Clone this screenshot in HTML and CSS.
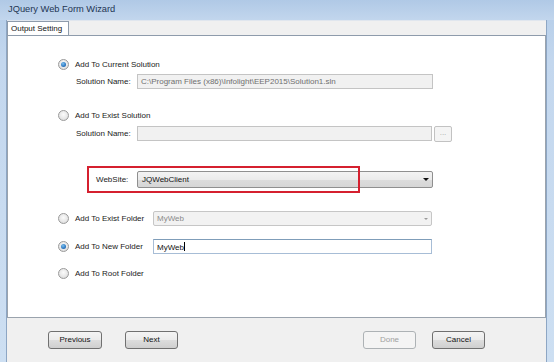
FILE: index.html
```html
<!DOCTYPE html>
<html>
<head>
<meta charset="utf-8">
<link rel="stylesheet" href="styles.css">
</head>
<body>
<div class="window">
  <div class="titlebar">JQuery Web Form Wizard</div>
  <div class="frame">
    <div class="tabstrip">
      <div class="tab">Output Setting</div>
    </div>
    <div class="panel">
      <div class="opt r1"><span class="radio on"></span><span>Add To Current Solution</span></div>
      <div class="field r2"><span class="lbl">Solution Name:</span><div class="input disabled w296">C:\Program Files (x86)\Infolight\EEP2015\Solution1.sln</div></div>
      <div class="opt r3"><span class="radio"></span><span>Add To Exist Solution</span></div>
      <div class="field r4"><span class="lbl">Solution Name:</span><div class="input disabled w295"></div><div class="browse">...</div></div>
      <div class="site r5">
        <span class="lbl2">WebSite:</span>
        <div class="combo"><span>JQWebClient</span><span class="arrow"></span></div>
        <div class="highlight"></div>
      </div>
      <div class="opt r6"><span class="radio"></span><span class="lbl3">Add To Exist Folder</span><div class="combo dis"><span>MyWeb</span><span class="arrow grey"></span></div></div>
      <div class="opt r7"><span class="radio on"></span><span class="lbl3">Add To New Folder</span><div class="input active w279">MyWeb<span class="caret"></span></div></div>
      <div class="opt r8"><span class="radio"></span><span>Add To Root Folder</span></div>
    </div>
    <div class="footer">
      <div class="btn prev">Previous</div>
      <div class="btn next">Next</div>
      <div class="spacer"></div>
      <div class="btn done">Done</div>
      <div class="btn cancel">Cancel</div>
    </div>
  </div>
</div>
</body>
</html>
```
FILE: styles.css
```css
* { box-sizing: border-box; }
html, body { margin: 0; padding: 0; }
body {
  width: 554px; height: 362px; overflow: hidden;
  font-family: "Liberation Sans", Arial, sans-serif;
  font-size: 8px; color: #1a1a1a;
}
.window {
  width: 554px; height: 362px;
  display: flex; flex-direction: column;
  background: linear-gradient(to bottom, #b3cce8 0%, #c3d7ee 60px, #cddff2 100%);
}
.titlebar {
  height: 20px; padding: 4px 0 0 8px;
  font-size: 9.3px; color: #1e3553;
  background: linear-gradient(to bottom, #b0c9e6, #c2d6ed);
}
.frame {
  flex: 1; display: flex; flex-direction: column;
  margin: 0 7px 0 6px;
  border-left: 1px solid #8da6c4;
  border-right: 1px solid #8da6c4;
  background: #f0f0f0;
}
.tabstrip {
  height: 15px; display: flex; align-items: flex-end;
  background: #f0f0f0; border-top: 1px solid #e0e6ee;
}
.tab {
  height: 15px; width: 62px; margin-left: 0;
  background: #fff; border: 1px solid #8e9bab; border-bottom: none;
  padding: 2px 0 0 3px; font-size: 8px; color: #111;
  position: relative; top: 1px;
}
.panel {
  height: 283px; background: #fff;
  border: 1px solid #9aa3ad; border-top-color: #8e9bab;
  padding-top: 21px; position: relative;
}
.opt, .field, .site { display: flex; align-items: center; }
.opt { margin-left: 50px; height: 14px; }
.radio {
  width: 11px; height: 11px; border-radius: 50%;
  border: 1px solid #9a9a9a;
  background: radial-gradient(circle at 50% 40%, #fbfbfb 0%, #e6e6e6 60%, #d0d0d0 100%);
  margin-right: 6px; flex: none; position: relative;
}
.radio.on::after {
  content: ""; position: absolute; left: 2px; top: 2px;
  width: 5px; height: 5px; border-radius: 50%;
  background: radial-gradient(circle at 40% 35%, #7cc0ef 0%, #2c78c2 60%, #1b4f8c 100%);
}
.field { margin-left: 68px; }
.lbl { width: 61px; flex: none; }
.lbl2 { width: 41px; flex: none; }
.lbl3 { width: 78px; flex: none; }
.r1 { margin-top: 0; }
.r2 { margin-top: 3px; height: 15px; }
.r3 { margin-top: 19px; }
.r4 { margin-top: 3px; height: 17px; }
.r5 { margin-top: 29px; height: 17px; margin-left: 88px; position: relative; }
.r6 { margin-top: 23px; height: 15px; }
.r7 { margin-top: 13px; height: 15px; }
.r8 { margin-top: 12px; }
.input {
  height: 15px; border: 1px solid #b8b8b8; border-top-color: #a9a9a9;
  padding: 2px 0 0 3px; white-space: nowrap; overflow: hidden;
  background: #fff;
}
.input.disabled { background: #f1f1f1; color: #6f6f6f; border-color: #c4c4c4; }
.input.active { border-color: #a7bdd6; border-top-color: #7f9db9; color: #111; }
.w296 { width: 296px; }
.w295 { width: 295px; margin-top: -1px; }
.w279 { width: 279px; }
.caret { display: inline-block; width: 1px; height: 9px; background: #000; vertical-align: -1px; }
.browse {
  width: 18px; height: 16px; margin-left: 2px; margin-top: 1px;
  border: 1px solid #c2c2c2; border-radius: 2px; background: #f4f4f4;
  color: #a8a8a8; text-align: center; font-size: 8px; line-height: 12px;
}
.combo {
  width: 296px; height: 17px; display: flex; align-items: center; justify-content: space-between;
  border: 1px solid #8f8f8f; border-radius: 2px;
  background: linear-gradient(to bottom, #f3f3f3 0%, #ebebeb 50%, #dcdcdc 51%, #d6d6d6 100%);
  padding: 0 3px 0 4px; color: #111;
}
.combo.dis {
  width: 279px; height: 15px; background: #f2f2f2; border-color: #c6c6c6; color: #8a8a8a; padding-left: 3px;
}
.arrow {
  width: 0; height: 0; border-left: 3px solid transparent; border-right: 3px solid transparent;
  border-top: 3px solid #111;
}
.arrow.grey { border-top-color: #9a9a9a; border-left-width: 2px; border-right-width: 2px; border-top-width: 2px; }
.highlight {
  position: absolute; left: -9px; top: -5px; width: 273px; height: 27px;
  border: 2px solid #d5202f; pointer-events: none;
}
.footer {
  flex: 1; display: flex; align-items: flex-start; padding: 13px 0 0 41px;
  background: #f0f0f0;
}
.btn {
  height: 18px; border: 1px solid #707070; border-radius: 3px;
  background: linear-gradient(to bottom, #f4f4f4 0%, #ebebeb 50%, #dddddd 51%, #cfcfcf 100%);
  text-align: center; line-height: 16px; font-size: 8px; color: #111;
}
.prev { width: 54px; }
.next { width: 53px; margin-left: 23px; }
.spacer { flex: 1; }
.done { width: 53px; border-color: #adb2b5; background: #f4f4f4; color: #a0a0a0; }
.cancel { width: 53px; margin-left: 16px; margin-right: 61px; }
```
